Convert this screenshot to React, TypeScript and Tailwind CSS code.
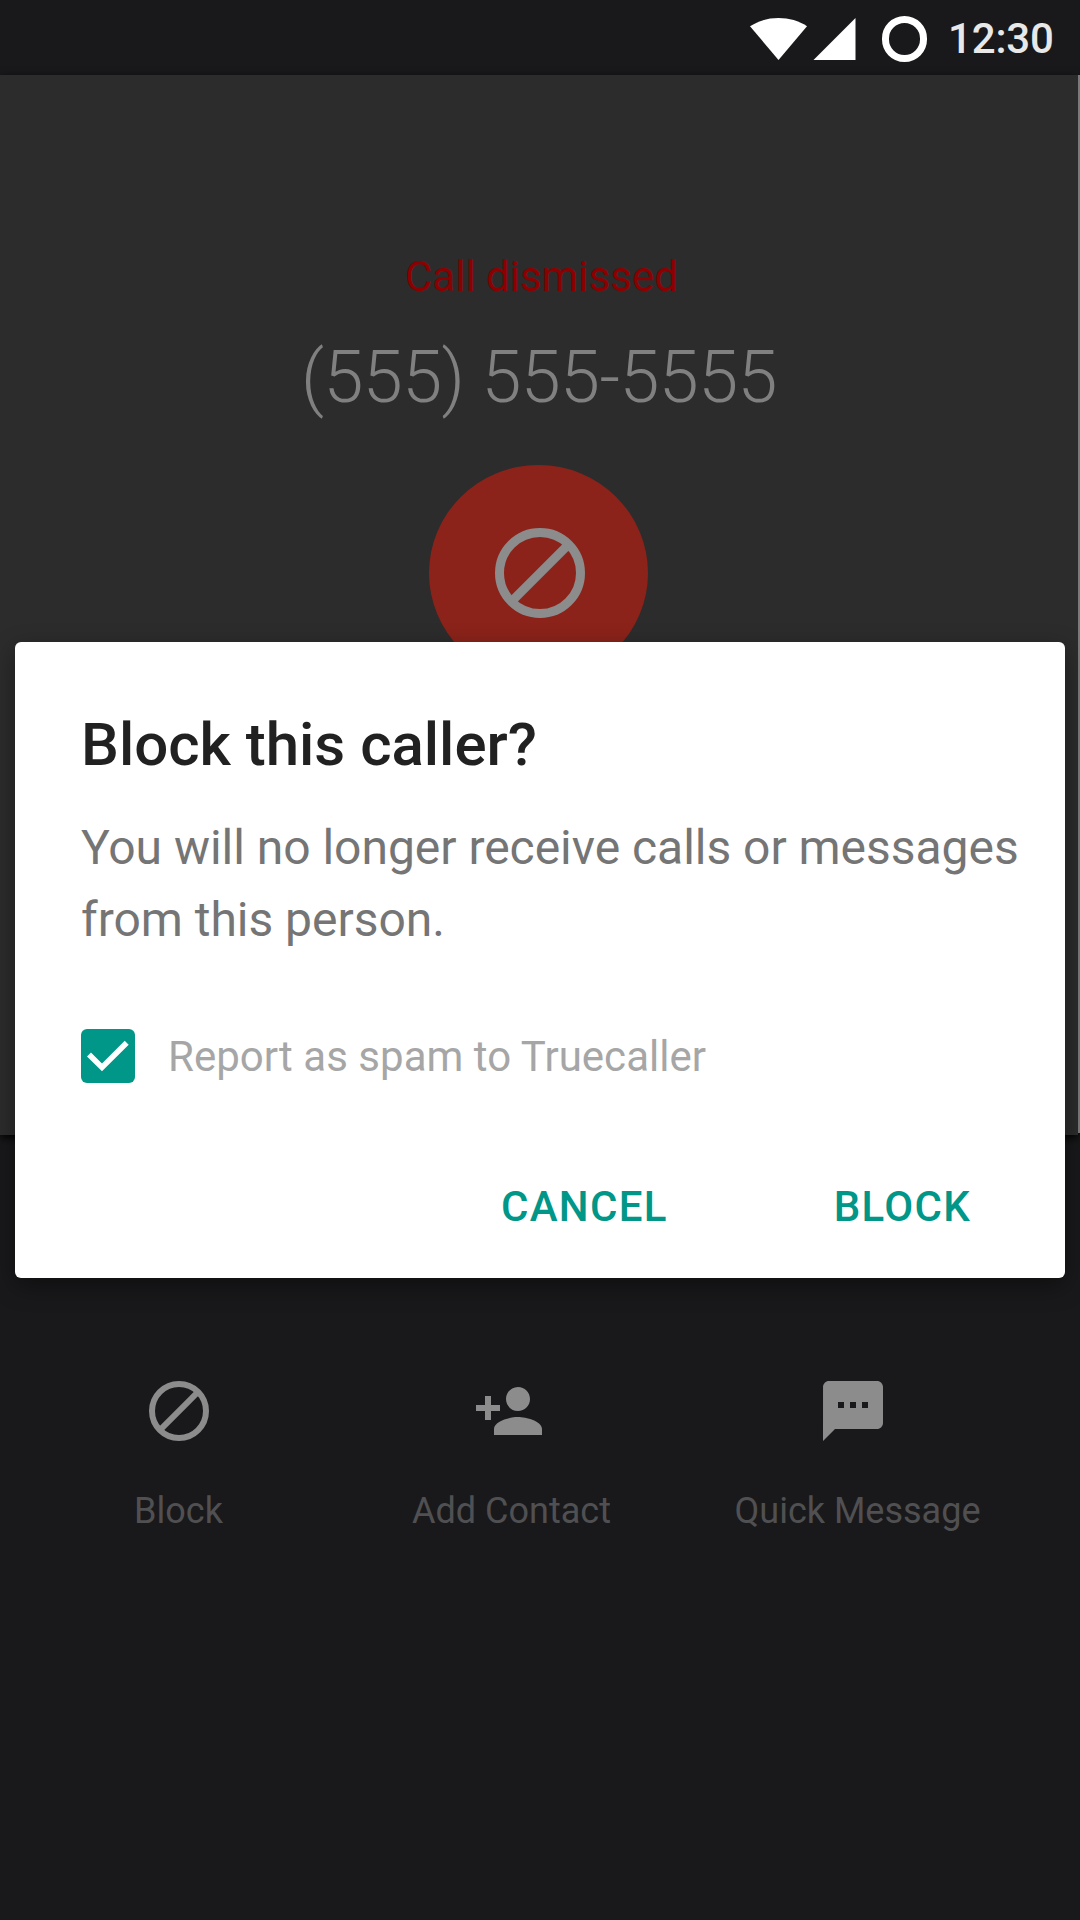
import React, { ReactNode } from "react";

function BlockIcon({ className }: { className: string }) {
  return (
    <svg viewBox="0 0 24 24" className={className} fill="none" stroke="currentColor" strokeWidth="2">
      <circle cx="12" cy="12" r="9" />
      <path d="M5.64 18.36 18.36 5.64" />
    </svg>
  );
}

function StatusBar() {
  return (
    <header className="flex h-[75px] items-start bg-[#19191b] pl-[750px] text-white">
      <svg viewBox="0 0 57 42" className="mt-[18px] h-[42px] w-[57px]" fill="currentColor">
        <path d="M0 8.3C8 2.8 18 0 28.5 0S49 2.8 57 8.3L28.5 42z" />
      </svg>
      <svg viewBox="0 0 42 42" className="mt-[18px] ml-[6px] h-[42px] w-[43px]" fill="currentColor">
        <path d="M42 0v42H0z" />
      </svg>
      <span className="mt-4 ml-[26px] h-[46px] w-[45px] rounded-full border-[7px] border-white" />
      <span className="mt-[15px] ml-[21px] text-[42px] leading-[48px] font-medium tracking-[-0.15px] text-[#e8e8e9]">
        12:30
      </span>
    </header>
  );
}

function Action({ icon, label, className }: { icon: ReactNode; label: string; className: string }) {
  return (
    <button className={`flex flex-col items-center gap-[43px] text-[#8c8c8c] ${className}`}>
      {icon}
      <span className="pr-px text-[36px] leading-[42px] whitespace-nowrap text-[#505052]">{label}</span>
    </button>
  );
}

function BlockDialog() {
  return (
    <div
      role="dialog"
      className="absolute top-[642px] left-[15px] h-[636px] w-[1050px] rounded-[6px] bg-white pt-[68px] pl-[66px] shadow-[0_8px_24px_rgba(0,0,0,0.4)]"
    >
      <h1 className="text-[60px] leading-[70px] font-medium text-[#212121]">Block this caller?</h1>
      <p className="mt-8 text-[48px] leading-[72px] tracking-[-0.03px] whitespace-nowrap text-[#757575]">
        You will no longer receive calls or messages
        <br />
        from this person.
      </p>
      <label className="mt-[73px] flex h-[54px] items-start gap-[33px]">
        <span className="h-[54px] w-[54px] rounded-[6px] bg-[#009688]">
          <svg viewBox="0 0 54 54" className="h-full w-full" fill="none" stroke="white" strokeWidth="5.6">
            <path d="M8 25.5 21 38.4 45.7 13.8" />
          </svg>
        </span>
        <span className="pt-px text-[42px] leading-[54px] tracking-[0.03px] text-[#a6a6a6]">
          Report as spam to Truecaller
        </span>
      </label>
      <div className="mt-[100px] flex gap-[166px] pl-[420px] text-[42px] leading-[48px] font-medium tracking-[1.3px] text-[#009688]">
        <button>CANCEL</button>
        <button>BLOCK</button>
      </div>
    </div>
  );
}

export default function App() {
  return (
    <div className="relative h-[1920px] w-[1080px] overflow-hidden bg-[#19191b] font-['Roboto',sans-serif]">
      <StatusBar />
      <div className="flex h-[1060px] items-start">
        <main className="flex h-[1060px] w-[1078px] flex-col items-center bg-[#2c2c2c] pt-[178px] shadow-[0_3px_8px_rgba(0,0,0,0.9)]">
          <p className="pl-[5px] text-[42px] leading-[48px] text-[#8b0000]">Call dismissed</p>
          <p className="mt-[35px] text-[72px] leading-[84px] font-light tracking-[-0.58px] text-[#808080]">
            (555) 555-5555
          </p>
          <div className="mt-[45px] mr-px flex h-[216px] w-[219px] items-center justify-center rounded-[50%] bg-[#8b231a] pl-[3px]">
            <BlockIcon className="h-[108px] w-[108px] text-[#8c8c8c]" />
          </div>
        </main>
        <div className="h-[1058px] w-[2px] bg-[#7a7a7a]" />
      </div>
      <nav className="mt-60 flex items-start">
        <Action className="w-[358px]" label="Block" icon={<BlockIcon className="h-[72px] w-[72px]" />} />
        <Action
          className="w-[308px]"
          label="Add Contact"
          icon={
            <svg viewBox="0 0 24 24" className="mr-[6px] h-[72px] w-[72px]" fill="currentColor">
              <path d="M15 12c2.21 0 4-1.79 4-4s-1.79-4-4-4-4 1.79-4 4 1.79 4 4 4zm-9-2V7H4v3H1v2h3v3h2v-3h3v-2H6zm9 4c-2.67 0-8 1.34-8 4v2h16v-2c0-2.66-5.33-4-8-4z" />
            </svg>
          }
        />
        <Action
          className="w-[384px]"
          label="Quick Message"
          icon={
            <svg viewBox="0 0 24 24" className="mr-[10px] h-[72px] w-[72px]" fill="currentColor">
              <path d="M20 2H4c-1.1 0-1.99.9-1.99 2L2 22l4-4h14c1.1 0 2-.9 2-2V4c0-1.1-.9-2-2-2zM9 11H7V9h2v2zm4 0h-2V9h2v2zm4 0h-2V9h2v2z" />
            </svg>
          }
        />
      </nav>
      <BlockDialog />
    </div>
  );
}
